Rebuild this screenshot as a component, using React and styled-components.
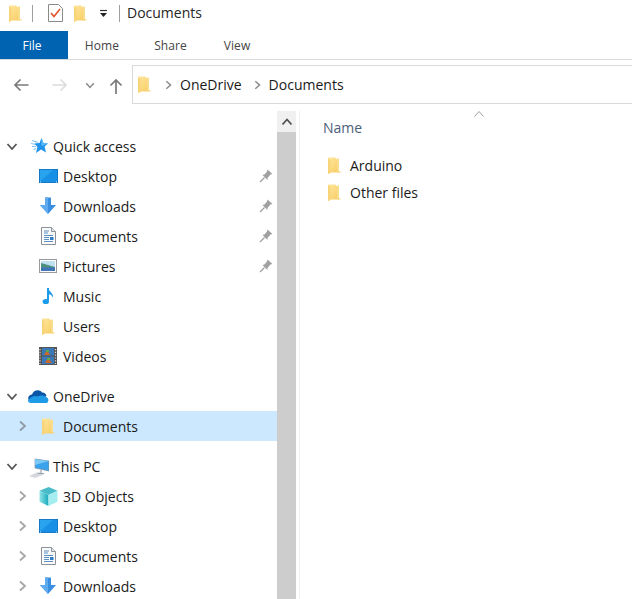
import React from "react";
import styled, { createGlobalStyle } from "styled-components";

const Global = createGlobalStyle`
  html, body { margin: 0; padding: 0; background: #fff; }
  body { font-family: "Open Sans", "Noto Sans", sans-serif; color: #1a1a1a; overflow: hidden; }
`;

const Win = styled.div`
  width: 632px; height: 599px; display: flex; flex-direction: column; overflow: hidden; background: #fff;
`;
const TitleBar = styled.div`
  height: 31px; display: flex; align-items: center; padding-left: 9px; flex: none; padding-bottom: 5px; box-sizing: border-box;
`;
const VSep = styled.div`
  width: 1px; height: 17px; background: #a0a0a0; margin: ${p => p.$m};
`;
const QatSlot = styled.div`
  display: flex; margin: ${p => p.$m}; align-items: center;
`;
const TitleText = styled.div`
  font-size: 14px; color: #262626; line-height: 18px; margin-left: 7px;
`;
const Ribbon = styled.div`
  height: 29px; display: flex; border-bottom: 1px solid #dadada; flex: none; box-sizing: border-box;
`;
const FileTab = styled.div`
  width: 68px; height: 28px; background: #0063b1; color: #fff; font-size: 12px; display: flex; align-items: center; justify-content: center; padding-right: 4px; box-sizing: border-box;
`;
const Tab = styled.div`
  width: ${p => p.$w}px; font-size: 12px; letter-spacing: 0.1px; color: #444; display: flex; align-items: center; justify-content: center; height: 28px; padding-right: 1px; box-sizing: border-box;
`;
const NavBar = styled.div`
  height: 51px; display: flex; align-items: flex-start; flex: none; padding-top: 5px; box-sizing: border-box;
`;
const NavButtons = styled.div`
  width: 132px; height: 39px; display: flex; align-items: center; flex: none;
`;
const NavIcon = styled.div`
  display: flex; margin-left: ${p => p.$l}px; padding-top: ${p => p.$t || 0}px;
`;
const Address = styled.div`
  flex: 1; height: 39px; box-sizing: border-box; border: 1px solid #d9d9d9; border-right: none; display: flex; align-items: center; padding-left: 5px; font-size: 14px; color: #1a1a1a;
`;
const Crumb = styled.span`
  margin-left: ${p => p.$l}px; display: flex;
`;
const Main = styled.div`
  flex: 1; display: flex; min-height: 0;
`;
const Side = styled.div`
  width: 277px; flex: none; padding-top: 20px; display: flex; flex-direction: column; overflow: hidden;
`;
const Row = styled.div`
  height: 30px; flex: none; display: flex; align-items: center; position: relative; background: ${p => p.$sel ? "#cce8ff" : "transparent"}; margin-top: ${p => p.$gap || 0}px;
`;
const Toggle = styled.div`
  width: 24px; margin-left: ${p => p.$l}px; display: flex; justify-content: center; flex: none;
`;
const IconSlot = styled.div`
  width: 22px; height: 22px; flex: none; display: flex; align-items: center; justify-content: center; margin-left: 3px;
`;
const Label = styled.div`
  font-size: 14px; line-height: 20px; color: #1a1a1a; margin-left: 4px; padding-top: 2px; white-space: nowrap;
`;
const Pin = styled.div`
  position: absolute; left: 259px; top: 8px; display: flex;
`;
const Scroll = styled.div`
  width: 19px; flex: none; background: #cdcdcd; display: flex; flex-direction: column;
`;
const ScrollUp = styled.div`
  height: 21px; background: #f0f0f0; display: flex; align-items: center; justify-content: center;
`;
const Content = styled.div`
  flex: 1; position: relative; margin-left: 3px; border-left: 1px solid #f0f0f0; padding-left: 23px; padding-top: 7px;
`;
const SortArrow = styled.div`
  position: absolute; left: 173px; top: -3px; display: flex;
`;
const Head = styled.div`
  font-size: 14px; line-height: 20px; color: #4c607a; margin-bottom: 14px;
`;
const File = styled.div`
  height: 27px; display: flex; align-items: center; padding-left: 5px;
`;
const FileName = styled.div`
  font-size: 14px; color: #1a1a1a; margin-left: 9px;
`;

const Folder = ({ w = 13, h = 17 }) => (
  <svg width={w} height={h} viewBox="0 0 13 17">
    <defs>
      <linearGradient id="fg" x1="0" y1="0" x2="1" y2="1">
        <stop offset="0" stopColor="#ffe8a0" />
        <stop offset="1" stopColor="#f6c95a" />
      </linearGradient>
    </defs>
    <path d="M0 0.5 H7.5 L8 2 H11 V14.5 H12.5 V15.5 H2.5 V16 L0 17Z" fill="url(#fg)" />
    <path d="M0 1.5 L0 17 L2.5 15.5 L2.5 3 Z" fill="#f7d478" />
    <rect x="9" y="1.5" width="2" height="13" fill="#f9dc8c" />
  </svg>
);

const Chevron = ({ dir = "right", c = "#a6a6a6", s = 12, sw = 1.8 }) => {
  const d = dir === "right" ? "M4 1.5 L9 6 L4 10.5" : dir === "down" ? "M1.5 4 L6 9 L10.5 4" : "M1.5 8.5 L6 3.5 L10.5 8.5";
  return (
    <svg width={s} height={s} viewBox="0 0 12 12">
      <path d={d} fill="none" stroke={c} strokeWidth={sw} />
    </svg>
  );
};

const Star = () => (
  <svg width="20" height="18" viewBox="0 0 20 18">
    <path d="M4 3.5 L10 5.5 M3 6.5 L8 7.5 M4 9.5 L8 9.5 M5.5 12.5 L8 11.5" stroke="#7fc4f2" strokeWidth="1.2" />
    <path d="M13.5 1 L15.5 6 L20 6.4 L16.6 9.6 L18 15.5 L13 12.6 L8 16 L9.4 10 L6.5 6.5 L11.5 6 Z" fill="#1f93ec" />
    <path d="M13.5 1 L15.5 6 L20 6.4 L13.5 9 Z" fill="#5fbcf6" />
  </svg>
);
const Desktop = () => (
  <svg width="19" height="14" viewBox="0 0 19 14">
    <rect x="0" y="0" width="19" height="14" fill="#1479c8" />
    <rect x="1" y="1" width="17" height="11.5" fill="#29a3ee" />
    <path d="M1 12.5 L14 1 H18 V12.5 Z" fill="#1790e6" />
    <path d="M1 13 H2 M17 13 H18" stroke="#fff" strokeWidth=".8" />
  </svg>
);
const DownArrow = () => (
  <svg width="18" height="18" viewBox="0 0 18 18">
    <path d="M6 0.5 H12 V8 H17 L9 17 L1 8 H6 Z" fill="#3a8fe0" />
    <path d="M6 0.5 H9 V17 L1 8 H6 Z" fill="#5eabf0" />
  </svg>
);
const Doc = () => (
  <svg width="15" height="18" viewBox="0 0 15 18">
    <path d="M0.5 0.5 H10.5 L14.5 4.5 V17.5 H0.5 Z" fill="#fafafa" stroke="#8d9299" />
    <path d="M10.5 0.5 V4.5 H14.5" fill="#dfe5ea" stroke="#8d9299" />
    <path d="M3 4 H8 M3 6 H7 M3 8.5 H12 M3 10.5 H8 M3 12.5 H8 M3 14.5 H12" stroke="#5a90c8" strokeWidth="1" />
    <rect x="9" y="10" width="3.5" height="3" fill="#2d7fc4" />
  </svg>
);
const Pictures = () => (
  <svg width="18" height="14" viewBox="0 0 18 14">
    <rect x=".5" y=".5" width="17" height="13" fill="#fff" stroke="#9a9a9a" />
    <rect x="2" y="2" width="14" height="10" fill="#bfe0ee" />
    <path d="M2 4 L9 6 L16 8 V9 H2 Z" fill="#4f8f7f" />
    <rect x="2" y="8.5" width="14" height="3.5" fill="#3f74b8" />
  </svg>
);
const Music = () => (
  <svg width="13" height="18" viewBox="0 0 13 18">
    <path d="M6 1 V13.5" stroke="#1c9be8" strokeWidth="2" />
    <path d="M6 1 C7 5 12 6 11 11 C10.5 8.5 8.5 7.5 6.5 7Z" fill="#1c9be8" />
    <ellipse cx="3.8" cy="14.5" rx="3.2" ry="2.6" fill="#1c9be8" />
  </svg>
);
const Videos = () => (
  <svg width="18" height="18" viewBox="0 0 18 18">
    <rect width="18" height="18" fill="#555" />
    <rect x="3" y="1" width="12" height="7.5" fill="#3a78b8" />
    <rect x="3" y="9.5" width="12" height="7.5" fill="#3a78b8" />
    <path d="M5 8 L8 3 L11 8Z M6 16 L9 11 L13 16Z" fill="#c96a2a" />
    <path d="M7 3 H10 V5 H7Z M8 11 H11 V13 H8Z" fill="#5fa84a" />
    <path d="M1 2 V17 M16.5 2 V17" stroke="#ddd" strokeWidth="1.2" strokeDasharray="1.2 1.6" />
  </svg>
);
const Cloud = () => (
  <svg width="22" height="14" viewBox="0 0 22 14">
    <path d="M3 12 C0 10 1 6 5 5.5 C6.5 0.5 13 0 15 3.5 C17 3 19 4.5 19.5 7 L10 13 Z" fill="#0c56a8" />
    <path d="M4 14 C0.5 14 0 10.5 3 9.5 C4.5 7.5 8 6 11 7.5 C13 6 17.5 6 18.5 8 C21.5 8 22.5 12 20 14 Z" fill="#1f9ae6" />
  </svg>
);
const PC = () => (
  <svg width="22" height="24" viewBox="0 0 22 24">
    <path d="M2 22 L11 18 L18 20 L8 24 Z" fill="#d4d8dc" />
    <path d="M8 5 L22 7 V17 L8 14 Z" fill="#3aa3ec" stroke="#7f8c98" strokeWidth=".7" />
    <path d="M8 5 L22 7 L8 11Z" fill="#7cc8f5" />
    <path d="M14 16 V19 M11 19.5 L17 19.5" stroke="#9aa4ac" strokeWidth="1.2" fill="none" />
  </svg>
);
const Cube = () => (
  <svg width="19" height="19" viewBox="0 0 18 18">
    <defs>
      <linearGradient id="cl" x1="0" y1="0" x2="1" y2="0">
        <stop offset="0" stopColor="#8fe4e8" />
        <stop offset="1" stopColor="#18a9bc" />
      </linearGradient>
    </defs>
    <path d="M9 0 L17.5 3.5 L9 7.5 L0.5 3.5 Z" fill="#48bcc8" />
    <path d="M0.5 3.5 L9 7.5 V18 L0.5 14 Z" fill="url(#cl)" />
    <path d="M17.5 3.5 L9 7.5 V18 L17.5 14 Z" fill="#a6edf0" />
  </svg>
);
const Checklist = () => (
  <svg width="15" height="18" viewBox="0 0 15 18">
    <path d="M0.5 0.5 H10.5 L14.5 4.5 V17.5 H0.5 Z" fill="#fff" stroke="#8a8a8a" />
    <path d="M3 9 L6 12.5 L12 5" fill="none" stroke="#e0532a" strokeWidth="1.6" />
  </svg>
);
const PinIcon = () => (
  <svg width="14" height="14" viewBox="0 0 14 14">
    <path d="M8.5 0.5 L13.5 5 L11.5 5.5 L8.5 9 L8.5 11 L3.5 6 L5.5 5.5 L8 2.5 Z" fill="#a0a0a0" />
    <path d="M5.5 8.5 L1 13" stroke="#a0a0a0" strokeWidth="1.3" />
  </svg>
);
const ArrowLeft = ({ c, flip }) => (
  <svg width="16" height="14" viewBox="0 0 16 14" style={flip ? { transform: "scaleX(-1)" } : undefined}>
    <path d="M15.5 7 H2 M7.5 1.5 L2 7 L7.5 12.5" fill="none" stroke={c} strokeWidth="1.7" />
  </svg>
);
const ArrowUp = () => (
  <svg width="14" height="16" viewBox="0 0 14 16">
    <path d="M7 16 V2 M1.5 7.5 L7 2 L12.5 7.5" fill="none" stroke="#7a7a7a" strokeWidth="1.7" />
  </svg>
);
const Qat = () => (
  <svg width="9" height="9" viewBox="0 0 9 9">
    <path d="M1 1.5 H8" stroke="#333" strokeWidth="1.2" />
    <path d="M1 4 H8 L4.5 8 Z" fill="#222" />
  </svg>
);

const QUICK = [
  ["Desktop", Desktop, true],
  ["Downloads", DownArrow, true],
  ["Documents", Doc, true],
  ["Pictures", Pictures, true],
  ["Music", Music, false],
  ["Users", Folder, false],
  ["Videos", Videos, false],
];
const PCS = [
  ["3D Objects", Cube],
  ["Desktop", Desktop],
  ["Documents", Doc],
  ["Downloads", DownArrow],
];

const Head1 = ({ Icon, name, gap }) => (
  <Row $gap={gap}>
    <Toggle $l={0}><Chevron dir="down" c="#555" /></Toggle>
    <IconSlot><Icon /></IconSlot>
    <Label>{name}</Label>
  </Row>
);

const Leaf = ({ Icon, name, pin, sel, arrow }) => (
  <Row $sel={sel}>
    <Toggle $l={10}>{arrow && <Chevron c={sel ? "#8f9aa5" : "#a6a6a6"} />}</Toggle>
    <IconSlot><Icon /></IconSlot>
    <Label>{name}</Label>
    {pin && <Pin><PinIcon /></Pin>}
  </Row>
);

export default function App() {
  return (
    <Win>
      <Global />
      <TitleBar>
        <Folder />
        <VSep $m="0 0 0 10px" />
        <QatSlot $m="0 0 0 15px"><Checklist /></QatSlot>
        <QatSlot $m="0 0 0 11px"><Folder /></QatSlot>
        <QatSlot $m="0 0 0 12px"><Qat /></QatSlot>
        <VSep $m="0 0 0 11px" />
        <TitleText>Documents</TitleText>
      </TitleBar>
      <Ribbon>
        <FileTab>File</FileTab>
        <Tab $w={69}>Home</Tab>
        <Tab $w={68}>Share</Tab>
        <Tab $w={65}>View</Tab>
      </Ribbon>
      <NavBar>
        <NavButtons>
          <NavIcon $l={13}><ArrowLeft c="#7a7a7a" /></NavIcon>
          <NavIcon $l={23}><ArrowLeft c="#dcdcdc" flip /></NavIcon>
          <NavIcon $l={17}><Chevron dir="down" c="#8a8a8a" s={10} /></NavIcon>
          <NavIcon $l={14} $t={3}><ArrowUp /></NavIcon>
        </NavButtons>
        <Address>
          <Folder />
          <Crumb $l={12}><Chevron c="#8a8a8a" s={10} /></Crumb>
          <Crumb $l={7}>OneDrive</Crumb>
          <Crumb $l={10}><Chevron c="#8a8a8a" s={10} /></Crumb>
          <Crumb $l={7}>Documents</Crumb>
        </Address>
      </NavBar>
      <Main>
        <Side>
          <Head1 Icon={Star} name="Quick access" />
          {QUICK.map(([n, I, p]) => <Leaf key={n} name={n} Icon={I} pin={p} />)}
          <Head1 Icon={Cloud} name="OneDrive" gap={10} />
          <Leaf name="Documents" Icon={Folder} sel arrow />
          <Head1 Icon={PC} name="This PC" gap={10} />
          {PCS.map(([n, I]) => <Leaf key={n} name={n} Icon={I} arrow />)}
        </Side>
        <Scroll>
          <ScrollUp><Chevron dir="up" c="#505050" /></ScrollUp>
        </Scroll>
        <Content>
          <SortArrow><Chevron dir="up" c="#a0a0a0" s={12} sw={1} /></SortArrow>
          <Head>Name</Head>
          <File><Folder /><FileName>Arduino</FileName></File>
          <File><Folder /><FileName>Other files</FileName></File>
        </Content>
      </Main>
    </Win>
  );
}
